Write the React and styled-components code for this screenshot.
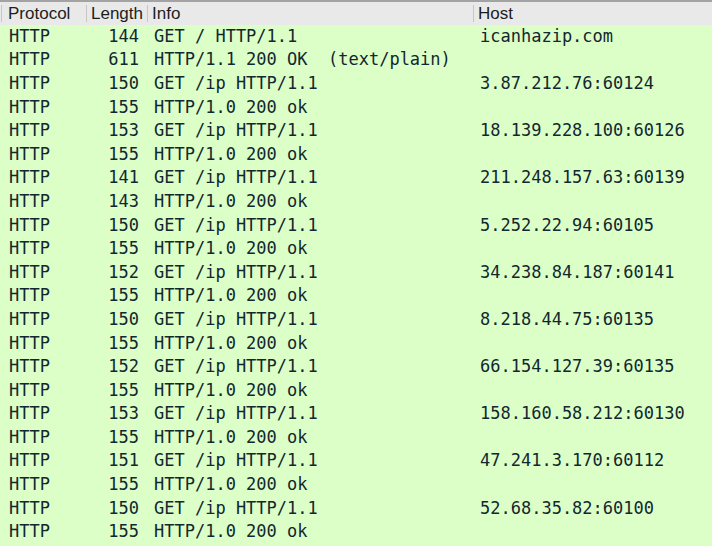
import React from 'react'
import styled, { createGlobalStyle } from 'styled-components'

const GlobalStyle = createGlobalStyle`
  html, body {
    margin: 0;
    padding: 0;
    background: #dcffc8;
    overflow: hidden;
  }
`

const colors = {
  text: '#12272e',
  row: '#dcffc8',
  header: '#e9e9e9',
  rule: '#c6c6c6',
}

const packets = [
  ['144', 'GET / HTTP/1.1', 'icanhazip.com'],
  ['611', 'HTTP/1.1 200 OK  (text/plain)', ''],
  ['150', 'GET /ip HTTP/1.1', '3.87.212.76:60124'],
  ['155', 'HTTP/1.0 200 ok', ''],
  ['153', 'GET /ip HTTP/1.1', '18.139.228.100:60126'],
  ['155', 'HTTP/1.0 200 ok', ''],
  ['141', 'GET /ip HTTP/1.1', '211.248.157.63:60139'],
  ['143', 'HTTP/1.0 200 ok', ''],
  ['150', 'GET /ip HTTP/1.1', '5.252.22.94:60105'],
  ['155', 'HTTP/1.0 200 ok', ''],
  ['152', 'GET /ip HTTP/1.1', '34.238.84.187:60141'],
  ['155', 'HTTP/1.0 200 ok', ''],
  ['150', 'GET /ip HTTP/1.1', '8.218.44.75:60135'],
  ['155', 'HTTP/1.0 200 ok', ''],
  ['152', 'GET /ip HTTP/1.1', '66.154.127.39:60135'],
  ['155', 'HTTP/1.0 200 ok', ''],
  ['153', 'GET /ip HTTP/1.1', '158.160.58.212:60130'],
  ['155', 'HTTP/1.0 200 ok', ''],
  ['151', 'GET /ip HTTP/1.1', '47.241.3.170:60112'],
  ['155', 'HTTP/1.0 200 ok', ''],
  ['150', 'GET /ip HTTP/1.1', '52.68.35.82:60100'],
  ['155', 'HTTP/1.0 200 ok', ''],
]

const columns = '86px 61px 326px 1fr'

export default function App() {
  return (
    <>
      <GlobalStyle />
      <Table>
        <HeaderRow>
          <HeaderCell $first>Protocol</HeaderCell>
          <HeaderCell>Length</HeaderCell>
          <HeaderCell>Info</HeaderCell>
          <HeaderCell>Host</HeaderCell>
        </HeaderRow>
        {packets.map((p, index) => (
          <Row key={index}>
            <Cell $first>HTTP</Cell>
            <Cell $right>{p[0]}</Cell>
            <Cell>{p[1]}</Cell>
            <Cell>{p[2]}</Cell>
          </Row>
        ))}
      </Table>
    </>
  )
}

const Table = styled.div`
  width: 712px;
  height: 546px;
  overflow: hidden;
  background: ${colors.row};
`

const HeaderRow = styled.div`
  display: grid;
  grid-template-columns: ${columns};
  height: 25px;
  box-sizing: border-box;
  border-top: 2px solid #a3a3a3;
  background: ${colors.header};
  align-items: center;
`

const HeaderCell = styled.div`
  font-family: 'Liberation Sans', Arial, sans-serif;
  font-size: 17px;
  color: #1d1d1d;
  white-space: nowrap;
  overflow: hidden;
  height: 17px;
  line-height: 17px;
  padding-left: ${(p) => (p.$first ? '6px' : '4px')};
  margin-left: ${(p) => (p.$first ? '1px' : '0')};
  border-left: 1px solid ${colors.rule};
`

const Row = styled.div`
  display: grid;
  grid-template-columns: ${columns};
  height: 23.6px;
  box-sizing: border-box;
  padding-bottom: 2px;
  align-items: center;
  background: ${colors.row};
`

const Cell = styled.div`
  font-family: 'DejaVu Sans Mono', Menlo, monospace;
  font-size: 17px;
  color: ${colors.text};
  white-space: pre;
  overflow: hidden;
  padding-left: ${(p) => (p.$right ? '0' : p.$first ? '9px' : '7px')};
  padding-right: ${(p) => (p.$right ? '8px' : '0')};
  text-align: ${(p) => (p.$right ? 'right' : 'left')};
`
